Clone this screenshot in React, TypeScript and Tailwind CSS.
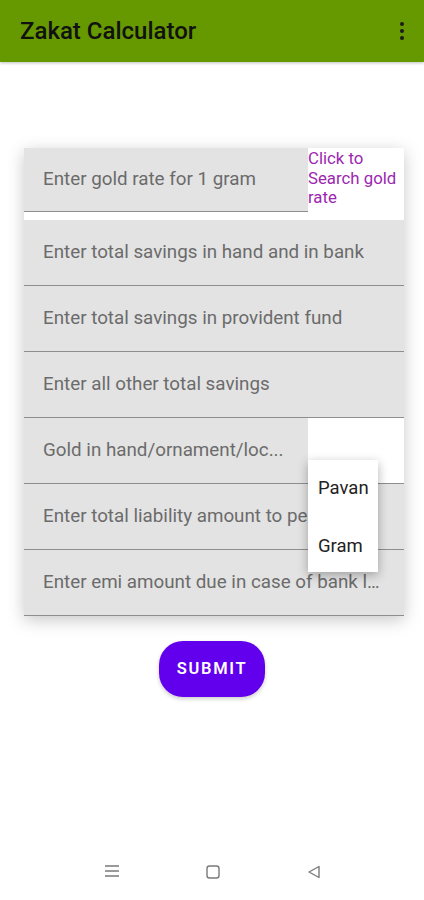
import { useState } from "react";

const fields = [
  "Enter total savings in hand and in bank",
  "Enter total savings in provident fund",
  "Enter all other total savings",
];

const tailFields = [
  "Enter total liability amount to people",
  "Enter emi amount due in case of bank loan",
];

function Field({ label, className = "" }: { label: string; className?: string }) {
  return (
    <div className={`h-[66px] flex items-center pl-[19px] pr-[20px] bg-[#e3e3e3] border-b border-[#8e8e8e] ${className}`}>
      <span className="text-[18.8px] text-[#6b6b6b] truncate">{label}</span>
    </div>
  );
}

export default function App() {
  const [unit] = useState("Pavan");

  return (
    <div className="w-[424px] h-[900px] bg-white flex flex-col font-['Roboto',sans-serif] relative overflow-hidden">
      <header className="h-[62px] bg-[#669900] flex items-center justify-between pl-[20px] pr-[14px] shadow-[0_1px_3px_rgba(0,0,0,0.25)]">
        <h1 className="text-[24px] text-[#111] font-medium">Zakat Calculator</h1>
        <div className="flex flex-col gap-[3px] items-center px-[6px]">
          <span className="w-[4px] h-[4px] rounded-full bg-[#1b1b1b]" />
          <span className="w-[4px] h-[4px] rounded-full bg-[#1b1b1b]" />
          <span className="w-[4px] h-[4px] rounded-full bg-[#1b1b1b]" />
        </div>
      </header>

      <main className="flex flex-col">
        <div className="mt-[86px] ml-[24px] w-[380px] bg-white shadow-[0_4px_16px_rgba(0,0,0,0.22)] relative">
          <div className="flex h-[64px]">
            <div className="w-[284px] flex items-center pl-[19px] bg-[#e3e3e3] border-b border-[#8e8e8e]">
              <span className="text-[18.8px] text-[#6b6b6b]">Enter gold rate for 1 gram</span>
            </div>
            <div className="flex-1 pt-[1px] text-[16.8px] leading-[19.5px] text-[#9c27b0]">
              Click to Search gold rate
            </div>
          </div>
          <div className="h-[8px]" />
          {fields.map((f) => (
            <Field key={f} label={f} />
          ))}
          <div className="flex h-[66px] border-b border-[#8e8e8e]">
            <div className="w-[284px] flex items-center pl-[19px] bg-[#e3e3e3]">
              <span className="text-[18.8px] text-[#6b6b6b]">Gold in hand/ornament/loc...</span>
            </div>
            <div className="flex-1 bg-white" />
          </div>
          {tailFields.map((f) => (
            <Field key={f} label={f} className="last:border-b-0" />
          ))}

          <div className="absolute left-[284px] top-[312px] w-[70px] h-[112px] bg-white shadow-[0_3px_10px_rgba(0,0,0,0.3)] flex flex-col justify-center gap-[30px] pl-[10px] pt-[3px] text-[18.5px] text-[#222]">
            <span className={unit === "Pavan" ? "" : ""}>Pavan</span>
            <span>Gram</span>
          </div>
        </div>

        <button className="mt-[25px] self-center w-[106px] h-[56px] rounded-[24px] bg-[#6200ee] text-white text-[16.5px] font-semibold tracking-[1.7px] shadow-[0_2px_4px_rgba(0,0,0,0.2)]">
          SUBMIT
        </button>
      </main>

      <nav className="absolute bottom-[20px] left-0 right-0 flex justify-between pl-[104px] pr-[102px]">
        <svg width="16" height="14" viewBox="0 0 16 14" fill="none" stroke="#7a7a7a" strokeWidth="1.4">
          <path d="M1 2h14M1 7h14M1 12h14" />
        </svg>
        <svg width="16" height="16" viewBox="0 0 16 16" fill="none" stroke="#7a7a7a" strokeWidth="1.4">
          <rect x="2" y="2" width="12" height="12" rx="2.5" />
        </svg>
        <svg width="16" height="16" viewBox="0 0 16 16" fill="none" stroke="#7a7a7a" strokeWidth="1.4" strokeLinejoin="round">
          <path d="M13 2.5v11L3 8z" />
        </svg>
      </nav>
    </div>
  );
}
